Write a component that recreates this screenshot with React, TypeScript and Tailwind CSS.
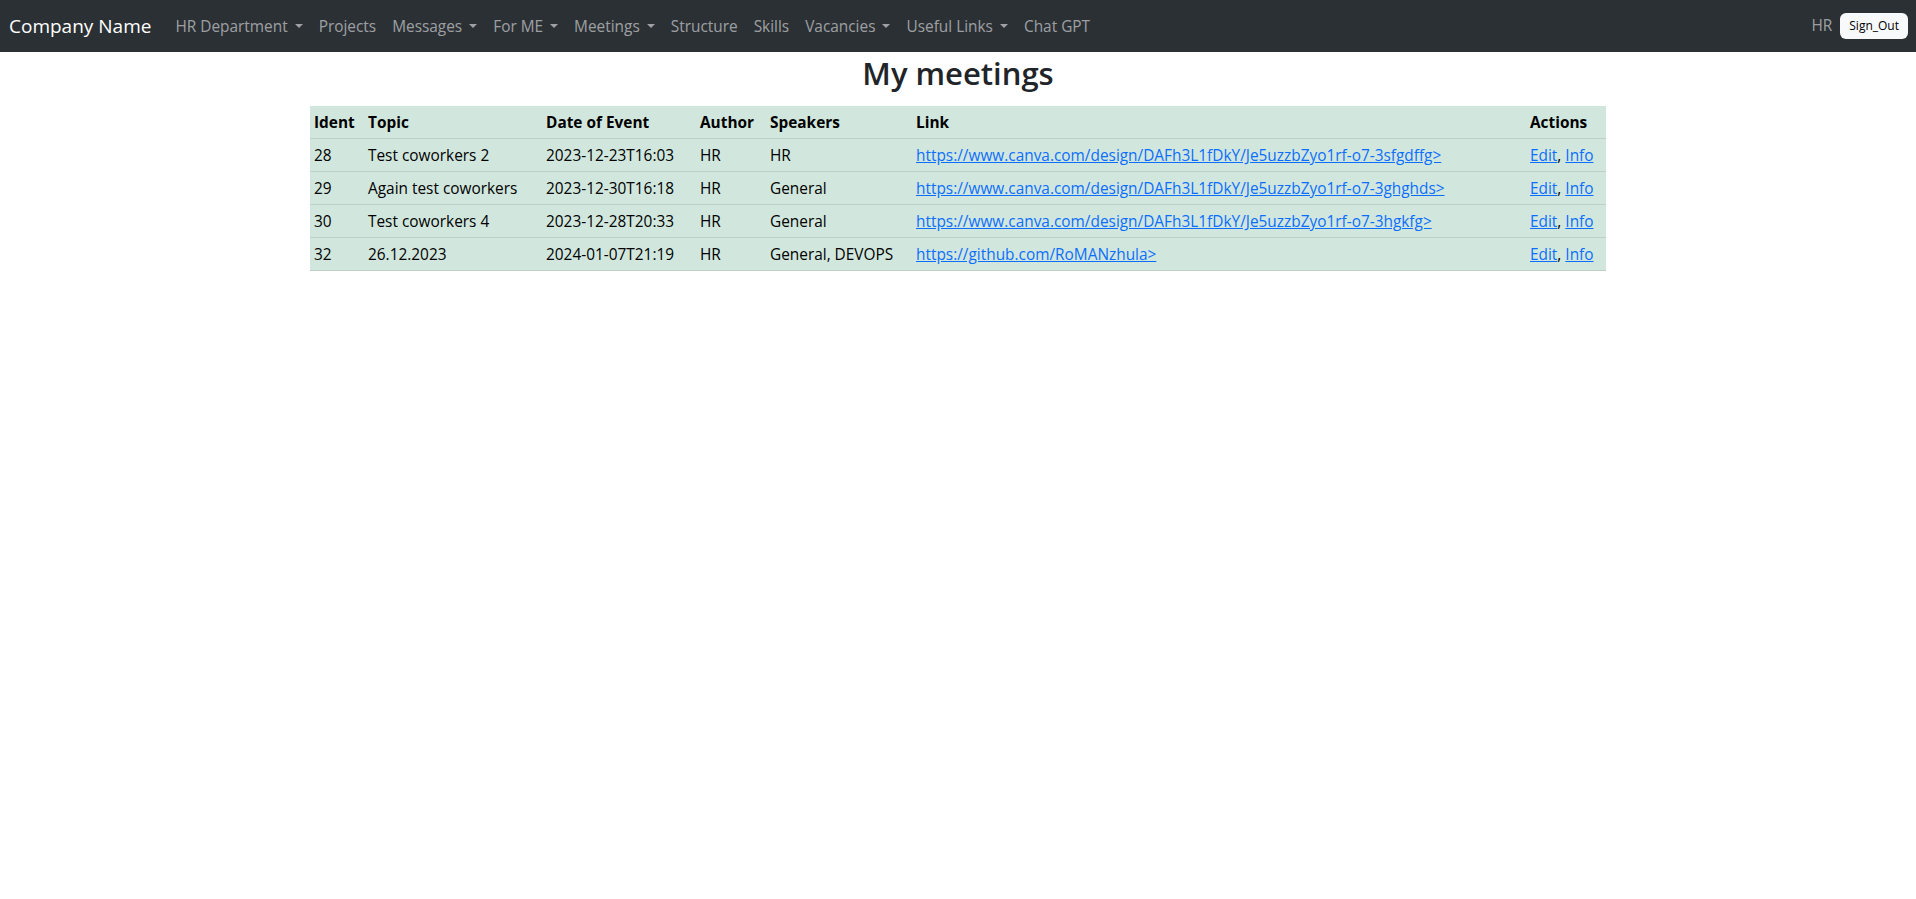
import React from "react";

const font = { fontFamily: '"Open Sans", "Noto Sans", sans-serif' };

const navItems = [
  { label: "HR Department", drop: true },
  { label: "Projects", drop: false },
  { label: "Messages", drop: true },
  { label: "For ME", drop: true },
  { label: "Meetings", drop: true },
  { label: "Structure", drop: false },
  { label: "Skills", drop: false },
  { label: "Vacancies", drop: true },
  { label: "Useful Links", drop: true },
  { label: "Chat GPT", drop: false },
];

const meetings = [
  {
    id: 28,
    topic: "Test coworkers 2",
    date: "2023-12-23T16:03",
    author: "HR",
    speakers: "HR",
    link: "https://www.canva.com/design/DAFh3L1fDkY/Je5uzzbZyo1rf-o7-3sfgdffg>",
  },
  {
    id: 29,
    topic: "Again test coworkers",
    date: "2023-12-30T16:18",
    author: "HR",
    speakers: "General",
    link: "https://www.canva.com/design/DAFh3L1fDkY/Je5uzzbZyo1rf-o7-3ghghds>",
  },
  {
    id: 30,
    topic: "Test coworkers 4",
    date: "2023-12-28T20:33",
    author: "HR",
    speakers: "General",
    link: "https://www.canva.com/design/DAFh3L1fDkY/Je5uzzbZyo1rf-o7-3hgkfg>",
  },
  {
    id: 32,
    topic: "26.12.2023",
    date: "2024-01-07T21:19",
    author: "HR",
    speakers: "General, DEVOPS",
    link: "https://github.com/RoMANzhula>",
  },
];

function Caret() {
  return (
    <span className="ml-[7px] inline-block align-[4px] border-x-[4px] border-t-[4px] border-x-transparent border-t-[rgba(255,255,255,0.55)]" />
  );
}

function Navbar() {
  return (
    <nav className="h-[52px] bg-[#2b3035] flex items-center pl-[9px] pr-[8px]">
      <a className="text-[19px] text-white mr-[16px] leading-[30px]">Company Name</a>
      <ul className="flex items-center">
        {navItems.map((n) => (
          <li key={n.label}>
            <a className="px-[8px] text-[15.4px] leading-[24px] text-[rgba(255,255,255,0.55)] whitespace-nowrap">
              {n.label}
              {n.drop && <Caret />}
            </a>
          </li>
        ))}
      </ul>
      <div className="ml-auto flex items-center gap-[8px]">
        <span className="text-[15.4px] text-[rgba(255,255,255,0.55)]">HR</span>
        <button className="bg-[#f8f9fa] text-[#000] text-[12px] leading-[18px] px-[9px] py-[4px] rounded-[6px]">
          Sign_Out
        </button>
      </div>
    </nav>
  );
}

export default function App() {
  return (
    <div style={font} className="min-h-screen bg-white text-[#212529]">
      <Navbar />
      <div className="w-[1296px] mx-auto">
        <h2 className="text-[31px] font-semibold leading-[38px] text-center mt-[2px] mb-[14px]">My meetings</h2>
        <table className="w-full table-fixed text-[15.4px] leading-[24px] bg-[#d1e7dd] text-black border-collapse">
          <colgroup>
            <col className="w-[54px]" />
            <col className="w-[178px]" />
            <col className="w-[154px]" />
            <col className="w-[70px]" />
            <col className="w-[146px]" />
            <col className="w-[614px]" />
            <col className="w-[80px]" />
          </colgroup>
          <thead>
            <tr className="border-b border-[#bcd0c7]">
              {["Ident", "Topic", "Date of Event", "Author", "Speakers", "Link", "Actions"].map((h) => (
                <th key={h} className="px-[4px] pt-[5px] pb-[3px] text-left font-bold">
                  {h}
                </th>
              ))}
            </tr>
          </thead>
          <tbody>
            {meetings.map((m) => (
              <tr key={m.id} className="border-b border-[#bcd0c7] [&>td]:px-[4px] [&>td]:pt-[5px] [&>td]:pb-[3px]">
                <td>{m.id}</td>
                <td className="whitespace-nowrap">{m.topic}</td>
                <td className="whitespace-nowrap">{m.date}</td>
                <td>{m.author}</td>
                <td className="whitespace-nowrap">{m.speakers}</td>
                <td className="whitespace-nowrap">
                  <a className="text-[#0d6efd] underline">{m.link}</a>
                </td>
                <td className="whitespace-nowrap">
                  <a className="text-[#0d6efd] underline">Edit</a>,{" "}
                  <a className="text-[#0d6efd] underline">Info</a>
                </td>
              </tr>
            ))}
          </tbody>
        </table>
      </div>
    </div>
  );
}
